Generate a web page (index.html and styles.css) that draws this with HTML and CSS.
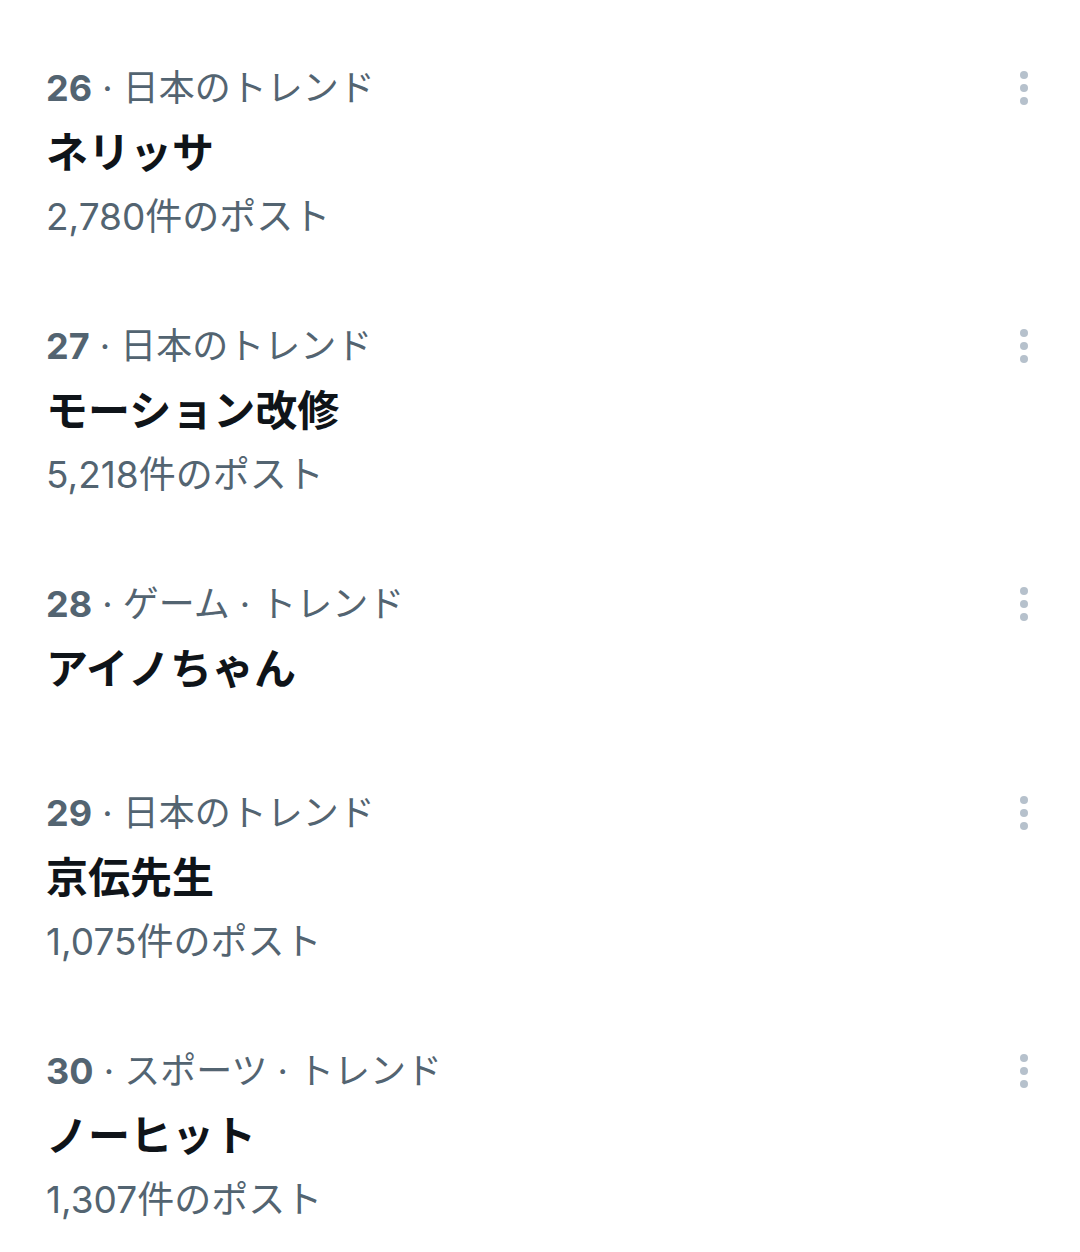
FILE: index.html
```html
<!DOCTYPE html>
<html lang="ja">
<head>
<meta charset="utf-8">
<title>トレンド</title>
<link rel="stylesheet" href="styles.css">
</head>
<body>
<main class="trends">
  <section class="trend">
    <div class="trend-head">
      <div class="meta"><span class="rank">26</span> · 日本のトレンド</div>
      <svg class="more" viewBox="0 0 40 40" aria-hidden="true"><circle cx="20" cy="7" r="4"/><circle cx="20" cy="20" r="4"/><circle cx="20" cy="33" r="4"/></svg>
    </div>
    <div class="title">ネリッサ</div>
    <div class="count">2,780件のポスト</div>
  </section>
  <section class="trend">
    <div class="trend-head">
      <div class="meta"><span class="rank">27</span> · 日本のトレンド</div>
      <svg class="more" viewBox="0 0 40 40" aria-hidden="true"><circle cx="20" cy="7" r="4"/><circle cx="20" cy="20" r="4"/><circle cx="20" cy="33" r="4"/></svg>
    </div>
    <div class="title">モーション改修</div>
    <div class="count">5,218件のポスト</div>
  </section>
  <section class="trend">
    <div class="trend-head">
      <div class="meta"><span class="rank">28</span> · ゲーム · トレンド</div>
      <svg class="more" viewBox="0 0 40 40" aria-hidden="true"><circle cx="20" cy="7" r="4"/><circle cx="20" cy="20" r="4"/><circle cx="20" cy="33" r="4"/></svg>
    </div>
    <div class="title">アイノちゃん</div>
  </section>
  <section class="trend">
    <div class="trend-head">
      <div class="meta"><span class="rank">29</span> · 日本のトレンド</div>
      <svg class="more" viewBox="0 0 40 40" aria-hidden="true"><circle cx="20" cy="7" r="4"/><circle cx="20" cy="20" r="4"/><circle cx="20" cy="33" r="4"/></svg>
    </div>
    <div class="title">京伝先生</div>
    <div class="count">1,075件のポスト</div>
  </section>
  <section class="trend">
    <div class="trend-head">
      <div class="meta"><span class="rank">30</span> · スポーツ · トレンド</div>
      <svg class="more" viewBox="0 0 40 40" aria-hidden="true"><circle cx="20" cy="7" r="4"/><circle cx="20" cy="20" r="4"/><circle cx="20" cy="33" r="4"/></svg>
    </div>
    <div class="title">ノーヒット</div>
    <div class="count">1,307件のポスト</div>
  </section>
</main>
</body>
</html>
```
FILE: styles.css
```css
html, body {
  margin: 0;
  padding: 0;
  background: #ffffff;
}

body {
  font-family: Inter, "Noto Sans CJK JP", sans-serif;
  color: #0f1419;
}

.trends {
  padding-top: 23px;
}

.trend {
  padding: 44px 36px 43px 46px;
}

.trend-head {
  display: flex;
  justify-content: space-between;
  align-items: center;
  height: 42px;
}

.meta {
  font-size: 36px;
  line-height: 42px;
  color: #536471;
  white-space: nowrap;
}

.rank {
  font-weight: 700;
}

.more {
  width: 40px;
  height: 40px;
  fill: #b6c1cc;
  flex: none;
}

.title {
  font-size: 42px;
  font-weight: 700;
  line-height: 52px;
  margin-top: 18px;
  margin-bottom: 10px;
  color: #0f1419;
}

.count {
  font-size: 37px;
  line-height: 42px;
  margin-top: 17px;
  color: #536471;
}
```
